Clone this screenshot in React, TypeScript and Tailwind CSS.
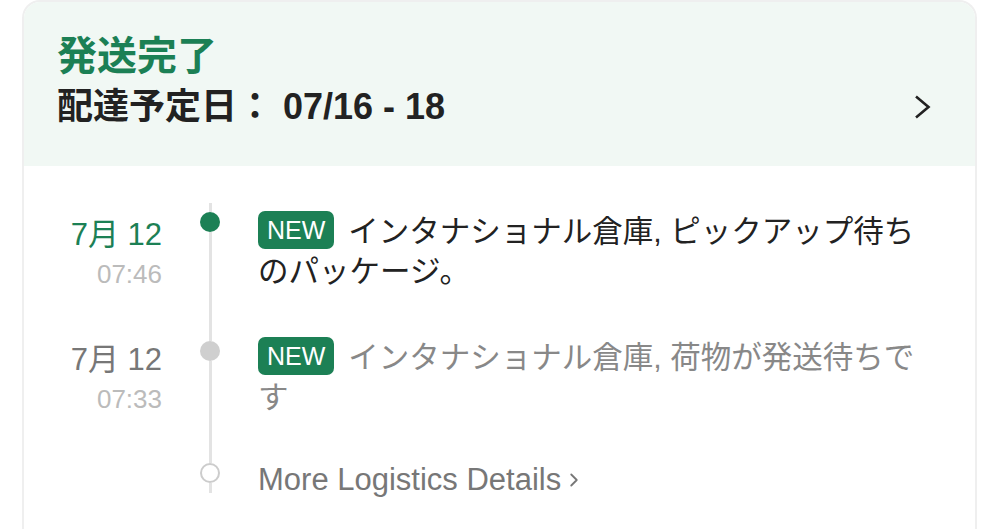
import { ChevronRight } from 'lucide-react';

const font = 'font-["Liberation_Sans","Noto_Sans_CJK_JP",sans-serif]';

export default function App() {
  return (
    <div className={`min-h-[529px] bg-white px-[22px] ${font}`}>
      <div className="h-[529px] overflow-hidden rounded-t-[18px] border-2 border-b-0 border-[#efefef]">
        {/* header */}
        <div className="flex items-end justify-between bg-[#f1f8f4] pt-[30px] pb-[37px] pl-[33px] pr-[43px]">
          <div>
            <div className="text-[40px] font-bold leading-[48px] text-[#1c8055]">
              発送完了
            </div>
            <div className="mt-[5px] text-[36px] font-bold leading-[44px] text-[#222]">
              配達予定日： 07/16 - 18
            </div>
          </div>
          <svg
            width="18"
            height="26"
            viewBox="0 0 18 26"
            className="mb-[9px]"
            fill="none"
            stroke="#222"
            strokeWidth="2.6"
          >
            <polyline points="2,2.5 14.5,13 2,23.5" />
          </svg>
        </div>

        {/* timeline */}
        <div className="pt-[37px]">
          <div className="flex h-[128px]">
            <div className="w-[138px] pt-[14px] text-right">
              <div className="text-[31px] leading-[36px] text-[#1c8055]">7月 12</div>
              <div className="mt-[6px] text-[26px] leading-[30px] text-[#bbbbbb]">07:46</div>
            </div>
            <div className="flex w-[96px] flex-col items-center">
              <div className="h-[9px] w-[3px] bg-[#e3e3e3]" />
              <div className="h-[20px] w-[20px] rounded-full bg-[#1c8055]" />
              <div className="w-[3px] flex-1 bg-[#e3e3e3]" />
            </div>
            <div className="flex-1 pt-[8px] pr-[45px] text-[30.5px] leading-[40px] text-[#222]">
              <span className="mr-[14px] inline-block rounded-[7px] bg-[#1c8055] px-[9px] align-top text-[25px] leading-[38px] text-white">
                NEW
              </span>
              インタナショナル倉庫, ピックアップ待ちのパッケージ。
            </div>
          </div>

          <div className="flex h-[122px]">
            <div className="w-[138px] pt-[11px] text-right">
              <div className="text-[31px] leading-[36px] text-[#777]">7月 12</div>
              <div className="mt-[6px] text-[26px] leading-[30px] text-[#bbbbbb]">07:33</div>
            </div>
            <div className="flex w-[96px] flex-col items-center">
              <div className="h-[10px] w-[3px] bg-[#e3e3e3]" />
              <div className="h-[20px] w-[20px] rounded-full bg-[#cfcfcf]" />
              <div className="w-[3px] flex-1 bg-[#e3e3e3]" />
            </div>
            <div className="flex-1 pt-[6px] pr-[45px] text-[30.5px] leading-[40px] text-[#888]">
              <span className="mr-[14px] inline-block rounded-[7px] bg-[#1c8055] px-[9px] align-top text-[25px] leading-[38px] text-white">
                NEW
              </span>
              インタナショナル倉庫, 荷物が発送待ちです
            </div>
          </div>

          <div className="flex">
            <div className="w-[138px]" />
            <div className="flex w-[96px] flex-col items-center">
              <div className="h-[10px] w-[3px] bg-[#e3e3e3]" />
              <div className="h-[20px] w-[20px] rounded-full border-2 border-[#cccccc] bg-white" />
              <div className="h-[10px] w-[3px] bg-[#e3e3e3]" />
            </div>
            <div className="flex items-center self-start pt-[7px] text-[31px] leading-[40px] text-[#777]">
              More Logistics Details
              <ChevronRight className="ml-[2px] h-[22px] w-[22px]" strokeWidth={2} />
            </div>
          </div>
        </div>
      </div>
    </div>
  );
}
